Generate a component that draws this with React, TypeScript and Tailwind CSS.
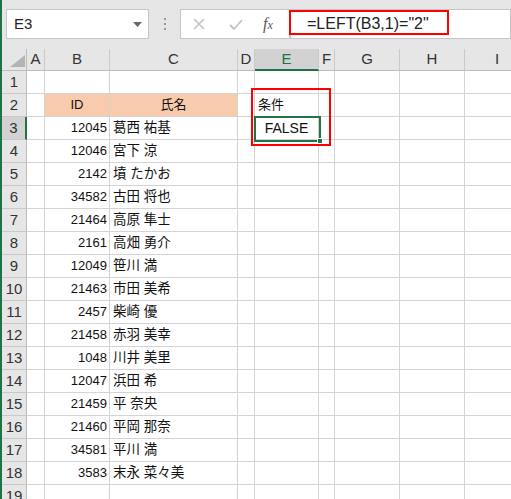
import React from "react";

const font = { fontFamily: '"Liberation Sans", "Noto Sans CJK JP", sans-serif' };

const cols = [
  { key: "A", w: "w-[18px]" },
  { key: "B", w: "w-[65px]" },
  { key: "C", w: "w-[128px]" },
  { key: "D", w: "w-[17px]" },
  { key: "E", w: "w-[64px]" },
  { key: "F", w: "w-[16px]" },
  { key: "G", w: "w-[65px]" },
  { key: "H", w: "w-[65px]" },
  { key: "I", w: "w-[65px]" },
];

const people: [string, string][] = [
  ["12045", "葛西 祐基"],
  ["12046", "宮下 涼"],
  ["2142", "墳 たかお"],
  ["34582", "古田 将也"],
  ["21464", "高原 隼士"],
  ["2161", "高畑 勇介"],
  ["12049", "笹川 満"],
  ["21463", "市田 美希"],
  ["2457", "柴崎 優"],
  ["21458", "赤羽 美幸"],
  ["1048", "川井 美里"],
  ["12047", "浜田 希"],
  ["21459", "平 奈央"],
  ["21460", "平岡 那奈"],
  ["34581", "平川 満"],
  ["3583", "末永 菜々美"],
];

function cellContent(row: number, col: string) {
  if (row === 2) {
    if (col === "B") return <span className="block w-full text-center">ID</span>;
    if (col === "C") return <span className="block w-full text-center">氏名</span>;
    if (col === "E") return <span className="pl-[3px]">条件</span>;
  }
  if (row === 3 && col === "E") return <span className="block w-full text-center text-[14px]">FALSE</span>;
  if (row >= 3 && row <= 18) {
    const p = people[row - 3];
    if (col === "B") return <span className="block w-full pr-[2px] text-right">{p[0]}</span>;
    if (col === "C") return <span className="pl-[3px] text-[13.5px]">{p[1]}</span>;
  }
  return null;
}

export default function App() {
  const rows = Array.from({ length: 19 }, (_, i) => i + 1);
  return (
    <div className="relative h-[499px] w-[511px] overflow-hidden border-l-2 border-[#217346] bg-[#e6e6e6]" style={font}>
      {/* formula bar */}
      <div className="flex h-[49px] items-start pt-[9px]">
        <div className="ml-[4px] flex h-[30px] w-[143px] items-center justify-between border border-[#c6c6c6] bg-white pl-[7px] pr-[6px] text-[15px] text-[#222]">
          <span>E3</span>
          <svg width="9" height="5" viewBox="0 0 9 5"><path d="M0 0h9L4.5 5z" fill="#666" /></svg>
        </div>
        <div className="flex h-[30px] w-[31px] flex-col items-center justify-center gap-[3px]">
          <span className="h-[2px] w-[2px] bg-[#9a9a9a]" />
          <span className="h-[2px] w-[2px] bg-[#9a9a9a]" />
          <span className="h-[2px] w-[2px] bg-[#9a9a9a]" />
        </div>
        <div className="flex h-[30px] w-[110px] items-center border border-[#c6c6c6] bg-white">
          <svg className="ml-[12px]" width="12" height="12" viewBox="0 0 12 12">
            <path d="M1 1l10 10M11 1L1 11" stroke="#c3c3c3" strokeWidth="1.6" />
          </svg>
          <svg className="ml-[24px]" width="14" height="11" viewBox="0 0 14 11">
            <path d="M1 6l4 4 8-9" stroke="#c3c3c3" strokeWidth="1.8" fill="none" />
          </svg>
          <span className="ml-[20px] text-[16px] italic text-[#555]" style={{ fontFamily: '"Liberation Serif", serif' }}>
            f<span className="text-[12px]">x</span>
          </span>
        </div>
        <div className="flex h-[30px] flex-1 items-center border border-[#c6c6c6] bg-white pl-[16px] text-[16px] text-[#222]">
          =LEFT(B3,1)="2"
        </div>
      </div>

      {/* column headers */}
      <div className="flex h-[22px]">
        <div className="relative w-[25px] shrink-0 border-b border-r border-[#bcbcbc]">
          <svg className="absolute left-[8px] top-[6px]" width="15" height="12" viewBox="0 0 15 12">
            <path d="M15 0V12H0z" fill="#b4b4b4" />
          </svg>
        </div>
        {cols.map((c) => (
          <div
            key={c.key}
            className={`${c.w} flex shrink-0 items-center justify-center border-r border-[#c9c9c9] text-[15px] ${
              c.key === "E" ? "border-b-2 border-b-[#217346] bg-[#d2d2d2] text-[#217346]" : "border-b border-b-[#bcbcbc] text-[#333]"
            }`}
          >
            {c.key}
          </div>
        ))}
      </div>

      {/* rows */}
      {rows.map((r) => (
        <div key={r} className="flex h-[23px]">
          <div
            className={`flex w-[25px] shrink-0 items-center justify-center border-b border-[#c9c9c9] text-[15px] text-[#333] ${
              r === 3 ? "border-r-2 border-r-[#217346] bg-[#d2d2d2]" : "border-r border-r-[#bcbcbc]"
            }`}
          >
            {r}
          </div>
          {cols.map((c) => (
            <div
              key={c.key}
              className={`${c.w} flex shrink-0 items-center overflow-visible whitespace-nowrap border-b border-r border-[#d4d4d4] text-[13px] text-[#111] ${
                r === 2 && (c.key === "B" || c.key === "C") ? "bg-[#f8cbad]" : "bg-white"
              }`}
            >
              {cellContent(r, c.key)}
            </div>
          ))}
        </div>
      ))}

      {/* E3 selection */}
      <div className="pointer-events-none absolute left-[252px] top-[116px] h-[26px] w-[67px] border-2 border-[#217346]">
        <div className="absolute -bottom-[4px] -right-[4px] h-[6px] w-[6px] border border-white bg-[#217346]" />
      </div>

      {/* red highlights */}
      <div className="pointer-events-none absolute left-[287px] top-[10px] h-[25px] w-[160px] border-2 border-[#ff0000]" />
      <div className="pointer-events-none absolute left-[249px] top-[88px] h-[58px] w-[80px] border-2 border-[#ff0000]" />
    </div>
  );
}
